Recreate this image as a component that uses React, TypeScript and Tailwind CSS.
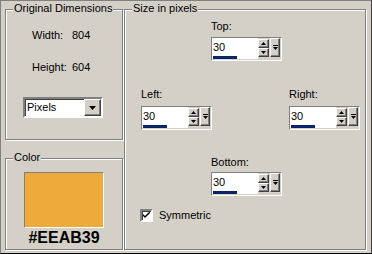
import React from "react";

const etched = "relative border border-[#808080] shadow-[inset_1px_1px_0_#fff,1px_1px_0_#fff]";
const sunken = "border border-t-[#808080] border-l-[#808080] border-b-white border-r-white";
const raised = "border border-t-white border-l-white border-b-[#404040] border-r-[#404040] shadow-[inset_-1px_-1px_0_#808080]";

function GroupTitle({ children }: { children: React.ReactNode }) {
    return (
        <span className="absolute -top-[8px] left-[7px] bg-[#d4d0c8] px-[1px] leading-[13px]">
            {children}
        </span>
    );
}

function SpinButton({ up }: { up?: boolean }) {
    return (
        <div className={`flex h-[9px] w-[11px] items-center justify-center bg-[#d4d0c8] ${raised}`}>
            <svg width="5" height="3" viewBox="0 0 5 3">
                {up ? <path d="M2.5 0 L5 3 L0 3 Z" fill="#000" /> : <path d="M0 0 L5 0 L2.5 3 Z" fill="#000" />}
            </svg>
        </div>
    );
}

function SpinBox({ value }: { value: string }) {
    return (
        <div className={`flex h-[24px] w-[71px] bg-[#d4d0c8] ${sunken}`}>
            {/* edit + progress */}
            <div className="flex w-[46px] flex-col">
                <div className="h-[18px] bg-white pl-[1px] leading-[18px]">{value}</div>
                <div className="h-[3px] bg-white pl-[1px]">
                    <div className="h-[3px] w-[24px] bg-[#0a246a]" />
                </div>
            </div>
            {/* up / down */}
            <div className="flex flex-col pt-[1px]">
                <SpinButton up />
                <SpinButton />
            </div>
            {/* drop button */}
            <div className={`ml-[1px] flex h-[19px] w-[10px] items-center justify-center bg-[#d4d0c8] ${raised}`}>
                <svg width="5" height="6" viewBox="0 0 5 6">
                    <rect x="0" y="0" width="5" height="1" fill="#000" />
                    <path d="M0 2 L5 2 L2.5 5 Z" fill="#000" />
                </svg>
            </div>
        </div>
    );
}

export default function App() {
    return (
        <div className="flex h-[254px] w-[372px] border border-t-[#808080] border-l-[#808080] border-b-black border-r-[#404040] bg-[#d4d0c8] pt-[8px] pl-[4px] pr-[5px] pb-[3px] font-['Liberation_Sans',Arial,sans-serif] text-[11px] leading-[13px] text-black">
            {/* Left column */}
            <div className="flex w-[118px] flex-col">
                {/* Original Dimensions */}
                <div className={`${etched} h-[131px]`}>
                    <GroupTitle>Original Dimensions</GroupTitle>
                    <div className="mt-[19px] flex pl-[26px]">
                        <span className="w-[40px]">Width:</span>
                        <span>804</span>
                    </div>
                    <div className="mt-[19px] flex pl-[26px]">
                        <span className="w-[40px]">Height:</span>
                        <span>604</span>
                    </div>
                    <div className="ml-[17px] mt-[23px] flex h-[21px] w-[80px] border-2 border-t-[#808080] border-l-[#808080] border-b-white border-r-white bg-white">
                        <div className="flex-1 pl-[2px] leading-[17px] shadow-[inset_1px_1px_0_#404040]">Pixels</div>
                        <div className={`flex h-[17px] w-[17px] items-center justify-center bg-[#d4d0c8] ${raised}`}>
                            <svg width="7" height="4" viewBox="0 0 7 4">
                                <path d="M0 0 L7 0 L3.5 4 Z" fill="#000" />
                            </svg>
                        </div>
                    </div>
                </div>

                {/* Color */}
                <div className={`${etched} mt-[18px] flex-1`}>
                    <GroupTitle>Color</GroupTitle>
                    <div className="ml-[18px] mt-[13px] h-[56px] w-[80px] border border-t-[#808080] border-l-[#808080] border-b-white border-r-white bg-[#eeab39]" />
                    <div className="ml-[18px] mt-[2px] w-[80px] text-center text-[16px] font-bold leading-[16px]">
                        #EEAB39
                    </div>
                </div>
            </div>

            {/* Size in pixels */}
            <div className={`${etched} ml-[1px] w-[242px]`}>
                <GroupTitle>Size in pixels</GroupTitle>

                <div className="mt-[10px] pl-[86px]">
                    <div>Top:</div>
                    <div className="mt-[4px]">
                        <SpinBox value="30" />
                    </div>
                </div>

                <div className="mt-[27px] flex gap-[77px] pl-[16px]">
                    <div>
                        <div>Left:</div>
                        <div className="mt-[5px]">
                            <SpinBox value="30" />
                        </div>
                    </div>
                    <div>
                        <div>Right:</div>
                        <div className="mt-[5px]">
                            <SpinBox value="30" />
                        </div>
                    </div>
                </div>

                <div className="mt-[26px] pl-[86px]">
                    <div>Bottom:</div>
                    <div className="mt-[3px]">
                        <SpinBox value="30" />
                    </div>
                </div>

                <label className="mt-[13px] flex items-center gap-[6px] pl-[15px]">
                    <span className="flex h-[13px] w-[13px] items-center justify-center border-2 border-t-[#808080] border-l-[#808080] border-b-white border-r-[#ffffff] bg-white shadow-[inset_1px_1px_0_#404040]">
                        <svg width="7" height="7" viewBox="0 0 7 7">
                            <path d="M0 2 L0 4 L2 6 L7 1 L7 -1 L2 4 Z" fill="#000" />
                        </svg>
                    </span>
                    <span>Symmetric</span>
                </label>
            </div>
        </div>
    );
}
